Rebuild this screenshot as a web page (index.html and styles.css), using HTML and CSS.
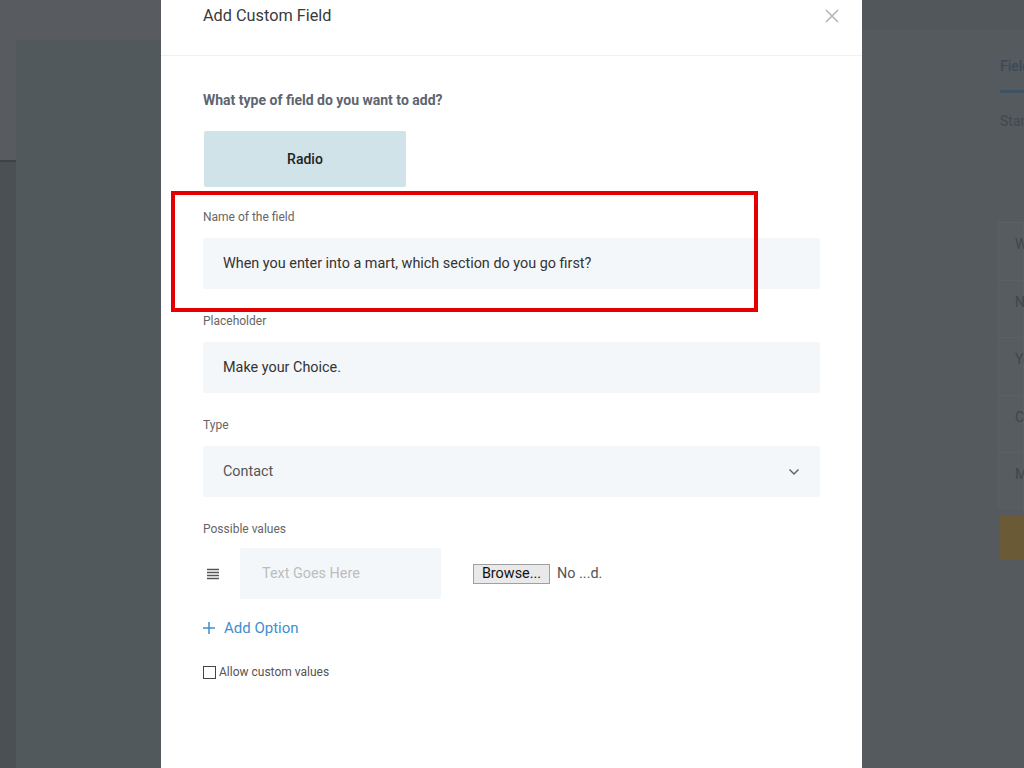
FILE: index.html
```html
<!DOCTYPE html>
<html lang="en">
<head>
    <meta charset="UTF-8">
    <meta name="viewport" content="width=device-width, initial-scale=1.0">
    <title>Add Custom Field</title>
    <link rel="stylesheet" href="styles.css">
</head>
<body>

    <div class="app">
        <div class="sidebar"></div>
        <div class="main"></div>
        <div class="panel">
            <div class="panel-inner">
                <div class="tab">Fields</div>
                <div class="tab-line"></div>
                <div class="sub">Standard</div>
                <div class="dot">+</div>
                <div class="list">
                    <div class="item">What</div>
                    <div class="item">Name</div>
                    <div class="item">Year</div>
                    <div class="item">Contact</div>
                    <div class="item">Mart</div>
                </div>
                <div class="save"></div>
            </div>
        </div>
    </div>

    <div class="modal">
        <div class="modal-header">
            <h2 class="modal-title">Add Custom Field</h2>
            <button class="close" aria-label="Close">
                <svg width="14" height="14" viewBox="0 0 14 14">
                    <path d="M1 1 L13 13 M13 1 L1 13" stroke="#b5b5b5" stroke-width="1.6" fill="none"/>
                </svg>
            </button>
        </div>

        <div class="modal-body">
            <p class="question">What type of field do you want to add?</p>
            <div class="type-tile">Radio</div>

            <div class="group">
                <label class="label">Name of the field</label>
                <div class="input">When you enter into a mart, which section do you go first?</div>
            </div>

            <div class="group">
                <label class="label">Placeholder</label>
                <div class="input">Make your Choice.</div>
            </div>

            <div class="group">
                <label class="label">Type</label>
                <div class="input select">
                    <span class="muted">Contact</span>
                    <svg width="12" height="8" viewBox="0 0 12 8">
                        <path d="M1.5 1.5 L6 6 L10.5 1.5" stroke="#666" stroke-width="1.5" fill="none"/>
                    </svg>
                </div>
            </div>

            <div class="group">
                <label class="label tight">Possible values</label>
                <div class="value-row">
                    <svg class="drag" width="12" height="12" viewBox="0 0 12 12">
                        <path d="M0 1.5 H12 M0 4.5 H12 M0 7.5 H12 M0 10.5 H12" stroke="#555" stroke-width="1.4"/>
                    </svg>
                    <div class="input small placeholder">Text Goes Here</div>
                    <div class="file">
                        <span class="browse">Browse...</span>
                        <span class="file-name">No ...d.</span>
                    </div>
                </div>
            </div>

            <a class="add-option" href="#">
                <svg width="12" height="12" viewBox="0 0 12 12">
                    <path d="M6 0 V12 M0 6 H12" stroke="#3d8fd1" stroke-width="1.5"/>
                </svg>
                Add Option
            </a>

            <label class="check">
                <span class="box"></span>
                Allow custom values
            </label>
        </div>

        <div class="highlight"></div>
    </div>

</body>
</html>
```

FILE: styles.css
```css
* {
    box-sizing: border-box;
}
body {
    margin: 0;
    font-family: Roboto, "Noto Sans", Arial, sans-serif;
    background-color: #585c61;
    height: 768px;
    overflow: hidden;
}
.app {
    display: flex;
    height: 768px;
}
.sidebar {
    width: 16px;
    margin-top: 160px;
    background-color: #4b5054;
    border-top: 2px solid #3f4347;
}
.main {
    flex: 1;
    margin-top: 40px;
    background-color: #52595c;
}
.panel {
    width: 162px;
    background-color: #51575b;
}
.panel-inner {
    margin-top: 30px;
    height: 738px;
    padding: 28px 0 0 120px;
    background-color: #545a5e;
    overflow: hidden;
    white-space: nowrap;
}
.tab {
    font-size: 14px;
    font-weight: 500;
    color: #3b4a58;
    padding-left: 18px;
}
.tab-line {
    margin: 16px 0 0 18px;
    height: 3px;
    background-color: #3d5262;
}
.sub {
    margin-top: 20px;
    padding-left: 18px;
    font-size: 14px;
    color: #42484d;
}
.dot {
    margin-top: 48px;
    padding-left: 44px;
    font-size: 10px;
    color: #474d51;
}
.list {
    margin-top: 34px;
    margin-left: 16px;
}
.item {
    height: 57.5px;
    padding: 0 0 0 16px;
    line-height: 42px;
    font-size: 14px;
    color: #40464a;
    border: 1px solid #5a6064;
    border-bottom: none;
    background-color: #565c60;
}
.save {
    margin: 6px 0 0 18px;
    height: 44px;
    background-color: #6a5a35;
}

.modal {
    position: absolute;
    top: 0;
    left: 161px;
    width: 701px;
    height: 768px;
    background-color: #fff;
}
.modal-header {
    height: 56px;
    display: flex;
    justify-content: space-between;
    padding: 6px 20px 0 42px;
    border-bottom: 1px solid #f0f0f0;
}
.modal-title {
    margin: 0;
    font-size: 16.3px;
    font-weight: 400;
    line-height: 20px;
    color: #3a3a3a;
}
.close {
    border: none;
    background: none;
    padding: 0;
    width: 20px;
    height: 20px;
    margin-top: 1px;
    cursor: pointer;
}
.modal-body {
    padding: 34px 42px 0 42px;
}
.question {
    margin: 0;
    font-size: 14px;
    font-weight: 700;
    line-height: 20px;
    color: #5d6570;
}
.type-tile {
    margin: 21px 0 22px 1px;
    width: 202px;
    height: 56px;
    display: flex;
    align-items: center;
    justify-content: center;
    background-color: #cfe3e8;
    font-size: 14px;
    font-weight: 500;
    color: #222;
    border-radius: 2px;
}
.group {
    margin-bottom: 24px;
}
.label {
    display: block;
    font-size: 12px;
    line-height: 16px;
    color: #666;
    margin: 1px 0 13px;
}
.tight {
    margin-bottom: 11px;
}
.input {
    height: 51px;
    display: flex;
    align-items: center;
    padding: 0 20px;
    background-color: #f4f7fa;
    font-size: 14.4px;
    color: #333;
    border-radius: 2px;
}
.select {
    justify-content: space-between;
    padding-right: 20px;
}
.muted {
    color: #555;
}
.value-row {
    display: flex;
    align-items: center;
}
.drag {
    margin: 0 21px 0 4px;
}
.small {
    width: 201px;
    padding-left: 22px;
}
.placeholder {
    color: #bdbdbd;
}
.file {
    margin-left: 32px;
    display: flex;
    align-items: center;
    font-size: 14.4px;
}
.browse {
    width: 77px;
    height: 20px;
    line-height: 18px;
    text-align: center;
    background-color: #e9e9e9;
    border: 1px solid #a0a0a0;
    color: #111;
}
.file-name {
    margin-left: 7px;
    color: #555;
}
.add-option {
    display: flex;
    align-items: center;
    gap: 9px;
    margin-top: -5px;
    font-size: 15px;
    line-height: 20px;
    color: #3d8fd1;
    text-decoration: none;
}
.check {
    display: flex;
    align-items: center;
    gap: 3px;
    margin-top: 26px;
    font-size: 12px;
    line-height: 16px;
    color: #555;
}
.box {
    width: 13px;
    height: 13px;
    border: 1px solid #444;
    background-color: #fff;
}
.highlight {
    position: absolute;
    top: 191px;
    left: 10px;
    width: 587px;
    height: 121px;
    border: 4px solid #e40000;
}
```
